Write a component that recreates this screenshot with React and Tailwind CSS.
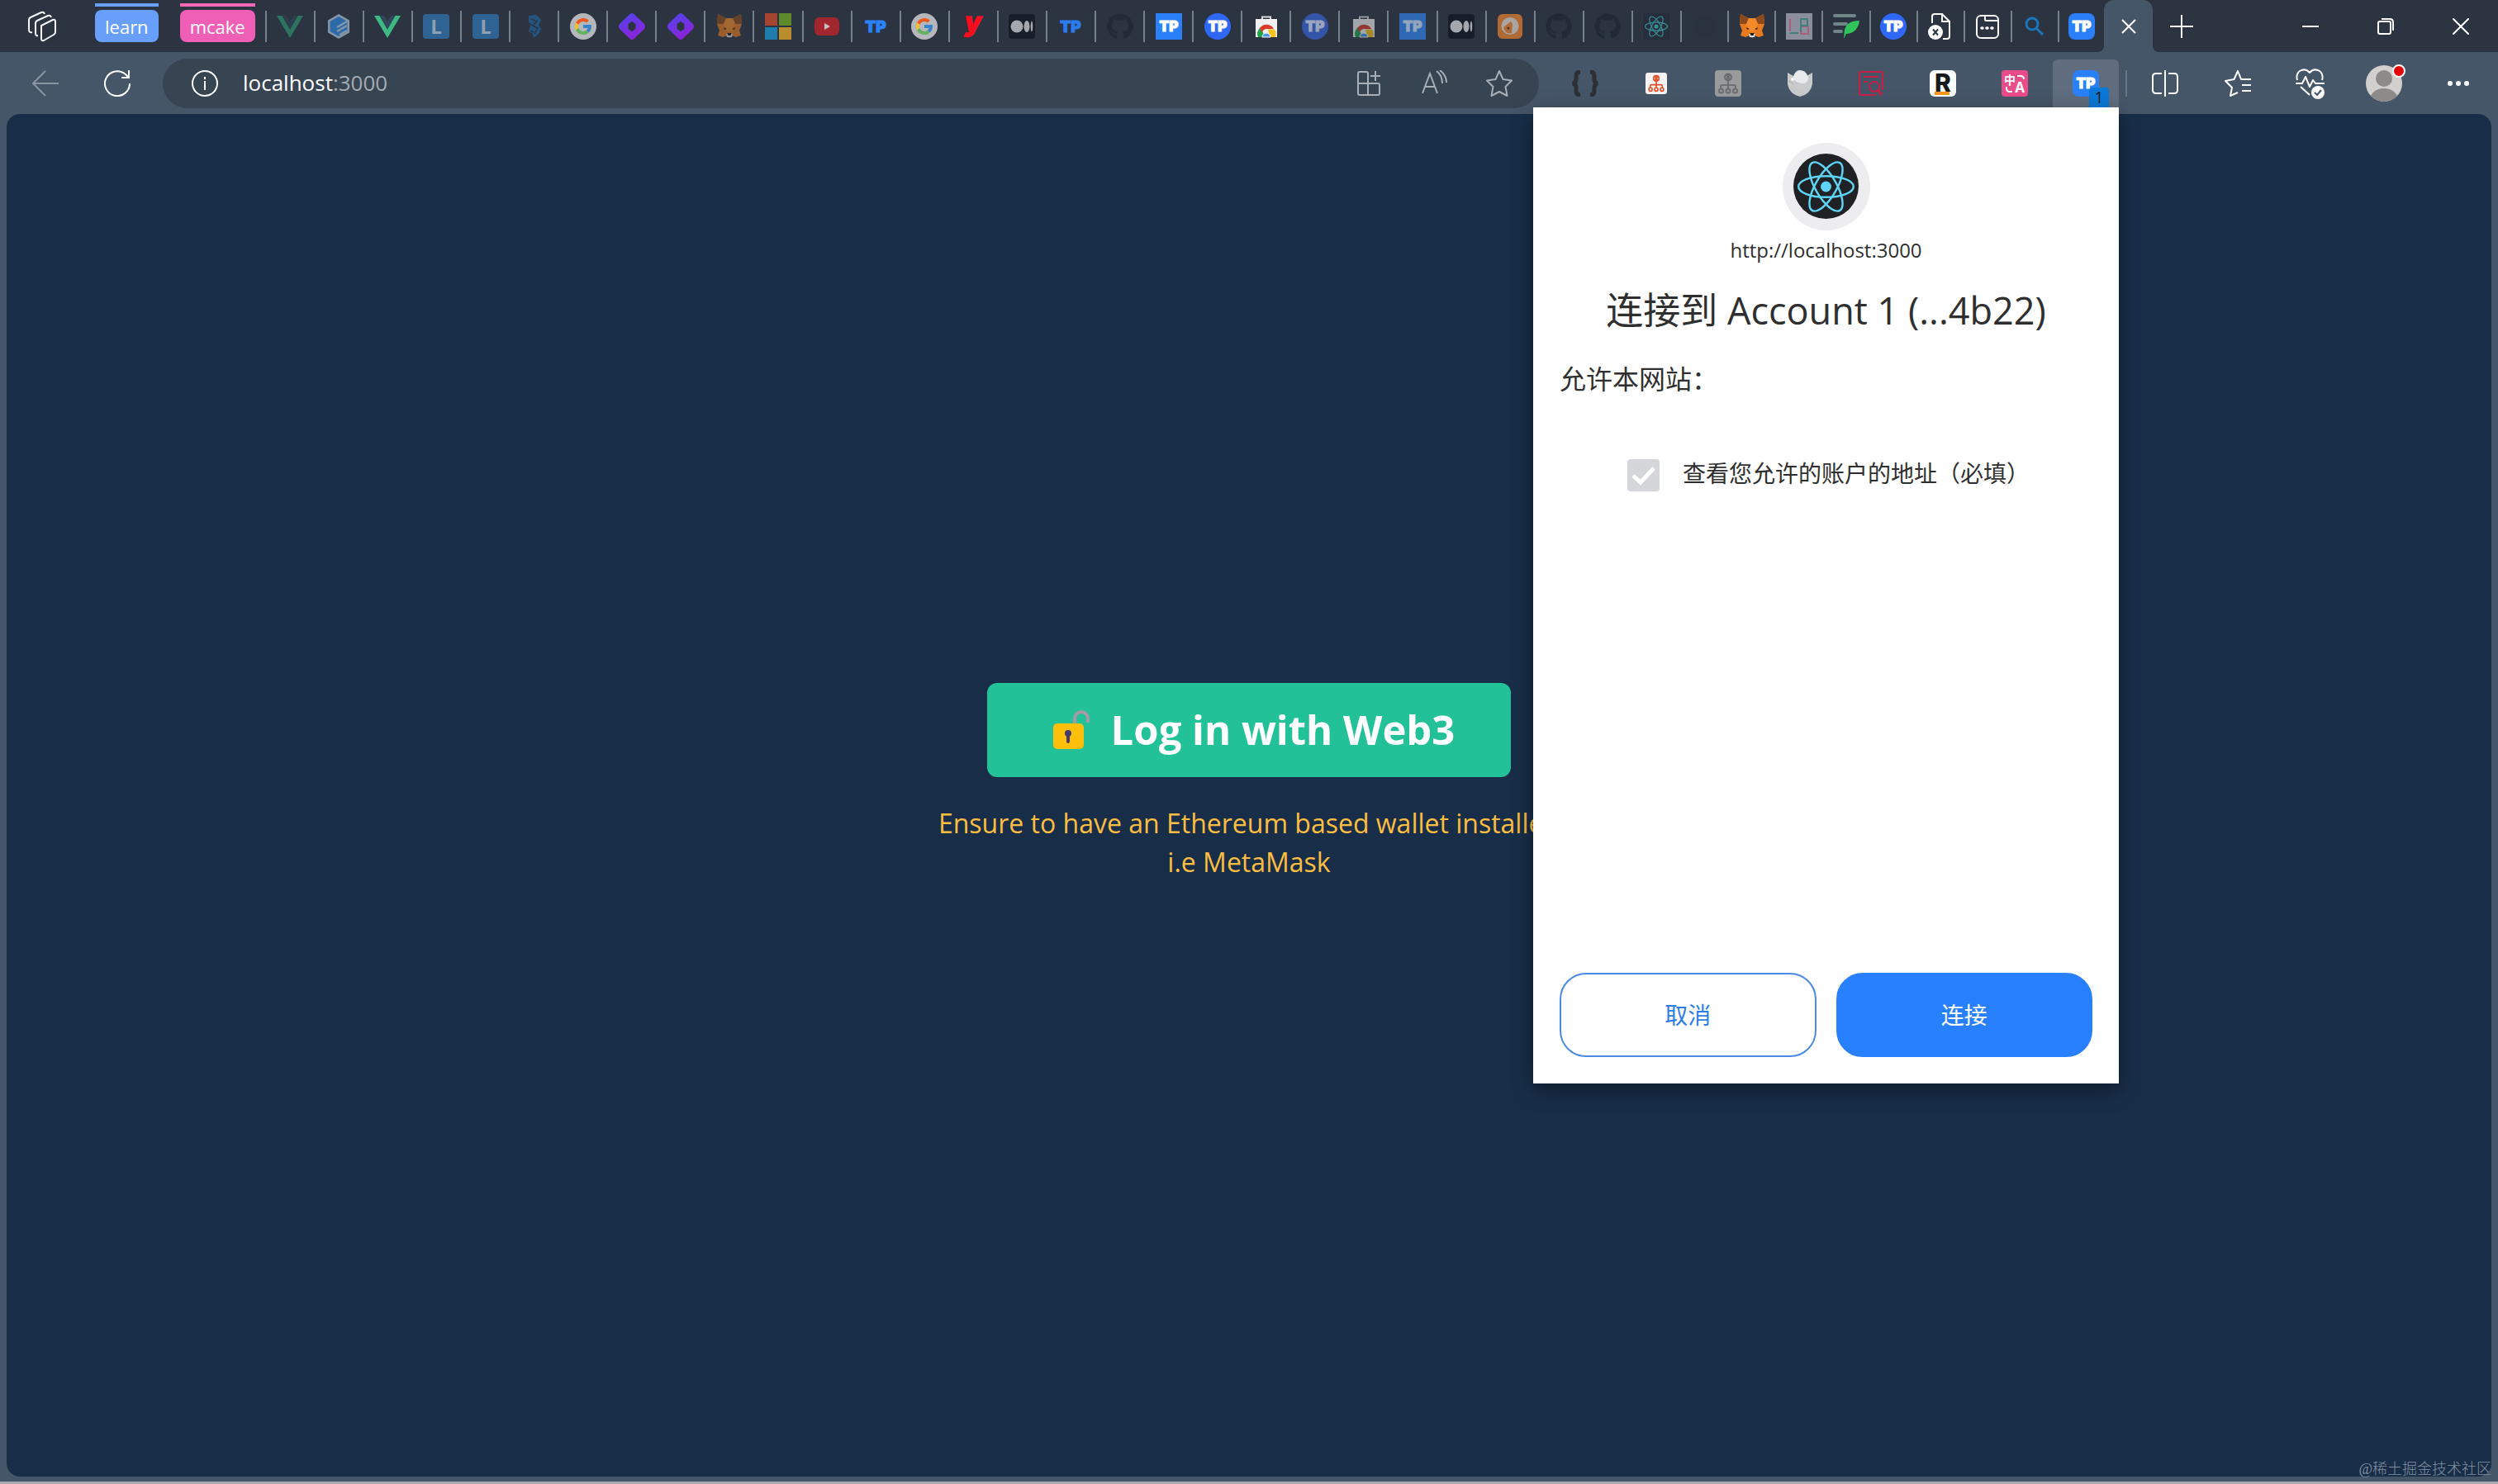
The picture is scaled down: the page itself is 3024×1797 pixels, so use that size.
import React, { useState } from "react";
import { FaGithub } from "react-icons/fa";
import { FcGoogle } from "react-icons/fc";

const Vue = ({ color, inner }) => (
  <svg viewBox="0 0 32 32" className="size-8">
    <path d="M0 3h6.5L16 19.5 25.500 3H32L16 30z" fill={color} />
    <path d="M6.500 3H12l4 7 4-7h5.500L16 19.500z" fill={inner} />
  </svg>
);

const Hexagon = () => (
  <svg viewBox="0 0 32 32" className="size-8">
    <path d="M16 1l13 7.500v15L16 31 3 23.500v-15z" fill="#8496a8" />
    <path d="M16 4l10.500 6v12L16 28 5.500 22V10z" fill="#2c6ba8" />
    <path d="M14 17l12-7M14 22l12-7M17 26l9-5" stroke="#8496a8" strokeWidth="2.500" fill="none" />
  </svg>
);

const Letter = () => (
  <svg viewBox="0 0 32 32" className="size-8">
    <rect y="1" width="32" height="30" rx="4" fill="#2f6393" />
    <text x="16" y="25" textAnchor="middle" fontSize="24" fontWeight="700" fill="#8e9fb0" className="font-['Open_Sans',sans-serif]">
      L
    </text>
  </svg>
);

const Brush = () => (
  <svg viewBox="0 0 32 32" className="size-8">
    <path d="M9 3l9-1 6 6-3 6 3 5-3 6-6 5-1-5-5-3 2-7-2-5z" fill="#25547e" />
    <path d="M12 7l7 3-5 5 6 3-4 7M10 12l3 3M11 21l4 2" stroke="#2b3440" strokeWidth="1.500" fill="none" />
  </svg>
);

const Google = () => (
  <span className="flex size-8 items-center justify-center rounded-full bg-[#b4b8bc]">
    <FcGoogle className="size-6 opacity-80" />
  </span>
);

const Diamond = () => (
  <svg viewBox="0 0 32 32" className="size-8">
    <defs>
      <linearGradient id="diamond" x1="0" y1="0" x2="0.4" y2="1">
        <stop offset="0" stopColor="#4f46f0" />
        <stop offset="1" stopColor="#8a24d8" />
      </linearGradient>
    </defs>
    <path d="M13 1.500q3-3 6 0L31 13q2 3 0 6L19 30.500q-3 3-6 0L1 19q-2-3 0-6z" fill="url(#diamond)" />
    <path d="M16 10l4.500 3v6L16 22l-4.500-3v-6z" fill="#2b3440" />
  </svg>
);

const Fox = () => (
  <svg viewBox="0 0 32 32" className="size-8">
    <path d="M2 1l10 5h8l10-5 1 12-3 8 2 6-6 2-5-2-3 3-3-3-5 2-6-2 2-6-3-8z" fill="#e8791f" />
    <path d="M2 1l10 5-3 7-8 0zM30 1l-10 5 3 7 8 0z" fill="#8a4a1c" />
    <path d="M12 6h8l3 7-4 9h-6l-4-9z" fill="#f48a2a" />
    <path d="M9 17l4 2-3 1zM23 17l-4 2 3 1z" fill="#3a2a24" />
    <path d="M12 25h8l-1 4h-6z" fill="#d8d8d8" />
    <path d="M13.500 24h5l-1 3h-3z" fill="#1c1c1c" />
  </svg>
);

const Microsoft = () => (
  <svg viewBox="0 0 32 32" className="size-8">
    <rect width="15" height="15" fill="#a64331" />
    <rect x="17" width="15" height="15" fill="#5d8b2c" />
    <rect y="17" width="15" height="15" fill="#1f7cab" />
    <rect x="17" y="17" width="15" height="15" fill="#b98d2b" />
  </svg>
);

const Youtube = () => (
  <svg viewBox="0 0 32 32" className="size-8">
    <rect x="1" y="5" width="30" height="22" rx="6" fill="#a1262e" />
    <path d="M13 12l7 4-7 4z" fill="#c9bfc0" />
  </svg>
);

const TP = ({ shape, fill, color = "#ffffff", size = "size-8" }) => (
  <svg viewBox="0 0 32 32" className={size}>
    {shape === "circle" && <circle cx="16" cy="16" r="16" fill={fill} />}
    {shape === "square" && <rect width="32" height="32" fill={fill} />}
    {shape === "rounded" && <rect width="32" height="32" rx="8" fill={fill} />}
    <text
      x="16"
      y={shape ? 22 : 23}
      textAnchor="middle"
      fontSize={shape ? 17 : 19}
      fontWeight="900"
      fill={color}
      stroke={color}
      strokeWidth="1"
      className="font-['Inter',sans-serif]"
    >
      TP
    </text>
  </svg>
);

const Yandex = () => (
  <svg viewBox="0 0 32 32" className="size-8 overflow-visible">
    <text x="16" y="22" textAnchor="middle" fontSize="32" fontWeight="900" fontStyle="italic" fill="#fb0d1f" stroke="#fb0d1f" className="font-['Inter',sans-serif]">
      y
    </text>
  </svg>
);

const Medium = () => (
  <svg viewBox="0 0 32 32" className="size-8">
    <rect y="1" width="32" height="30" rx="4" fill="#171d29" />
    <circle cx="10" cy="16" r="7.500" fill="#a5a7ad" />
    <ellipse cx="22" cy="16" rx="3.500" ry="7" fill="#a5a7ad" />
    <ellipse cx="28" cy="16" rx="1.300" ry="6.500" fill="#a5a7ad" />
  </svg>
);

const Store = () => (
  <svg viewBox="0 0 32 32" className="size-8">
    <path d="M11 7V4.500h10V7" fill="none" stroke="#d5d7d9" strokeWidth="2" />
    <rect x="3" y="7" width="26" height="22" fill="#f1f1f1" />
    <path d="M6 29a10 10 0 0 1 3-12l4 9-1 3z" fill="#22a04a" />
    <path d="M8 18a10 10 0 0 1 17 1H16a6 6 0 0 0-5 4z" fill="#dc3a2b" />
    <path d="M18 19.500h7.500A10 10 0 0 1 27 29h-7z" fill="#f8c51c" />
    <path d="M11 29a5 5 0 1 1 10 0z" fill="#4a94e8" stroke="#ffffff" />
  </svg>
);

const Orange = () => (
  <svg viewBox="0 0 32 32" className="size-8">
    <rect x="1" y="1" width="30" height="30" rx="6" fill="#b06a34" />
    <circle cx="16" cy="15.500" r="10.500" fill="#a9a5a3" />
    <path d="M8 17l9-7 2 3-1 11q-8 2-10-7z" fill="#b06a34" />
    <circle cx="14" cy="18" r="1.500" fill="#4b3a33" />
  </svg>
);

const ReactLogo = ({ color, size, stroke = 1.2 }) => (
  <svg viewBox="-16 -16 32 32" className={size} fill="none" stroke={color} strokeWidth={stroke}>
    <circle r="2.600" fill={color} stroke="none" />
    <ellipse rx="13.500" ry="5.200" />
    <ellipse rx="13.500" ry="5.200" transform="rotate(60)" />
    <ellipse rx="13.500" ry="5.200" transform="rotate(120)" />
  </svg>
);

const LowerBound = () => (
  <svg viewBox="0 0 32 32" className="size-8">
    <rect width="32" height="32" fill="#8b8f9d" />
    <path d="M5 7v15M18 22v3h9v-9h-9" stroke="#a4607c" strokeWidth="2" fill="none" />
    <path d="M5 24h10M18 15V7h8v8zM18 15v7" stroke="#3e8079" strokeWidth="2" fill="none" />
  </svg>
);

const Feather = () => (
  <svg viewBox="0 0 32 32" className="size-8">
    <path d="M2 3h24M2 13h14M2 22h8" stroke="#6f8688" strokeWidth="4" strokeLinecap="round" />
    <path d="M32 9Q17 9 14 20l-1 11 3-6q14-1 16-16z" fill="#2fc55a" />
  </svg>
);

const BlockedFile = () => (
  <svg viewBox="0 0 32 32" className="size-8" fill="none" stroke="#ffffff" strokeWidth="2">
    <path d="M6 12V4q0-3 3-3h9l9 9v18q0 3-3 3h-5M18 1v9h9" />
    <circle cx="10" cy="23" r="9" fill="#ffffff" stroke="none" />
    <path d="M7 19.500l6 7M13 19.500l-6 7" stroke="#2b3440" />
  </svg>
);

const PageDots = () => (
  <svg viewBox="0 0 32 32" className="size-8" fill="none" stroke="#ffffff" strokeWidth="2">
    <rect x="3" y="3" width="26" height="27" rx="5" />
    <path d="M13 3v5q0 1 1 1h15" />
    <path d="M9 18h1M15 18h1M21 18h1" strokeWidth="3.500" strokeLinecap="round" />
  </svg>
);

const Search = () => (
  <svg viewBox="0 0 32 32" className="size-8" fill="none" stroke="#1b75bd" strokeWidth="3">
    <circle cx="13" cy="13" r="7" />
    <path d="M18 18l8 8" />
  </svg>
);

const DarkGithub = () => <FaGithub className="size-8 text-[#222a35]" />;

const firstTabs = [
  ["Vue", <Vue color="#2c7360" inner="#2d3e4e" />],
  ["Builder", <Hexagon />],
  ["Vue docs", <Vue color="#3fb984" inner="#33475b" />],
  ["Learn", <Letter />],
  ["Lessons", <Letter />],
  ["Notes", <Brush />],
  ["Google", <Google />],
  ["Diamond", <Diamond />],
  ["Diamond app", <Diamond />],
  ["MetaMask", <span className="opacity-60"><Fox /></span>],
  ["Microsoft", <Microsoft />],
  ["YouTube", <Youtube />],
  ["TokenPocket", <TP color="#2a82f8" />],
  ["Google search", <Google />],
  ["Yarn", <Yandex />],
  ["Medium", <Medium />],
  ["TokenPocket docs", <TP color="#2a7cec" />],
  ["GitHub", <DarkGithub />],
  ["TokenPocket help", <TP shape="square" fill="#2a80f8" />],
  ["TokenPocket wallet", <TP shape="circle" fill="#2f68f6" />],
  ["Web store", <Store />],
  ["TokenPocket guide", <TP shape="circle" fill="#3454a8" color="#9aa6bd" />],
  ["Extensions", <span className="opacity-60"><Store /></span>],
  ["TokenPocket site", <TP shape="square" fill="#2f68b4" color="#94a6bd" />],
  ["Medium story", <Medium />],
  ["Blog", <Orange />],
  ["GitHub repo", <DarkGithub />],
  ["GitHub issues", <DarkGithub />],
  ["React", <span className="bg-[#252e3a]"><ReactLogo color="#3c8f98" size="size-8" /></span>],
];

const secondTabs = [
  ["Draft", <span className="size-6 rounded-full bg-[#29323e]" />],
  ["MetaMask docs", <Fox />],
  ["LB", <LowerBound />],
  ["Feather", <Feather />],
  ["TokenPocket app", <TP shape="circle" fill="#2f68f6" />],
  ["Missing file", <BlockedFile />],
  ["Page", <PageDots />],
  ["Search", <Search />],
];

const TabButton = ({ name, children }) => (
  <button
    aria-label={name}
    className="flex h-[38px] min-w-0 flex-1 items-center justify-center border-l-2 border-[#76808a]"
  >
    {children}
  </button>
);

const TabGroup = ({ label, bar, chip }) => (
  <div className="flex flex-col gap-1">
    <div className={`h-1 ${bar}`} />
    <button className={`h-[39px] rounded-lg px-3 text-[22px] leading-none text-white ${chip}`}>{label}</button>
  </div>
);

const TabBar = () => (
  <header className="flex h-[63px] items-center bg-[#2b3440]">
    <button aria-label="Workspaces" className="ml-[34px] mr-[47px]">
      <svg viewBox="0 0 34 38" className="h-[38px] w-[34px]" fill="none" stroke="#f4f6f8" strokeWidth="2" strokeLinejoin="round">
        <path d="M16 18l14-7q3-1 3 2v13q0 2-2 3l-12 7q-3 1-3-2z" />
        <path d="M12 30q-3 1-3-3V15q0-2 2-3l13-6q3-1 4 2M5 26q-4 1-4-3V11q0-2 2-3L16 2q3-1 4 2" />
      </svg>
    </button>
    <div className="flex gap-[26px] self-start pt-1">
      <TabGroup label="learn" bar="bg-[#689ffa]" chip="bg-[#689ffa]" />
      <TabGroup label="mcake" bar="bg-[#f06ab8]" chip="bg-[#ef5fb6]" />
    </div>
    <nav aria-label="Tabs" className="ml-3 flex flex-1 items-center">
      <div className="flex flex-[1714] items-center">
        {firstTabs.map(([name, icon]) => (
          <TabButton key={name} name={name}>{icon}</TabButton>
        ))}
      </div>
      <div className="flex flex-[457] items-center">
        {secondTabs.map(([name, icon]) => (
          <TabButton key={name} name={name}>{icon}</TabButton>
        ))}
      </div>
    </nav>
    <button aria-label="TokenPocket" className="flex h-[38px] w-14 items-center justify-center border-l-2 border-[#76808a]">
      <TP shape="rounded" fill="#2a80f8" />
    </button>
    <div className="relative flex w-[59px] items-center justify-center self-stretch rounded-t-xl bg-[#465669] before:absolute before:bottom-0 before:-left-2 before:size-2 before:bg-[radial-gradient(circle_at_0_0,transparent_8px,#465669_8px)] after:absolute after:bottom-0 after:-right-2 after:size-2 after:bg-[radial-gradient(circle_at_100%_0,transparent_8px,#465669_8px)]">
      <button aria-label="Close tab">
        <svg viewBox="0 0 18 18" className="size-[18px]" stroke="#ffffff" strokeWidth="2">
          <path d="M1 1l16 16M17 1L1 17" />
        </svg>
      </button>
    </div>
    <button aria-label="New tab" className="flex w-[69px] justify-center">
      <svg viewBox="0 0 28 28" className="size-7" stroke="#ffffff" strokeWidth="2">
        <path d="M14 0v28M0 14h28" />
      </svg>
    </button>
    <div className="ml-[76px] flex">
      <button aria-label="Minimize" className="flex w-[91px] items-center justify-center">
        <svg viewBox="0 0 20 20" className="size-5" stroke="#ffffff" strokeWidth="2">
          <path d="M0 10h20" />
        </svg>
      </button>
      <button aria-label="Restore" className="flex w-[91px] items-center justify-center">
        <svg viewBox="0 0 20 20" className="size-5" stroke="#ffffff" strokeWidth="2" fill="none">
          <rect x="1" y="4" width="15" height="15" rx="2" />
          <path d="M5 1h10q4 0 4 4v10" />
        </svg>
      </button>
      <button aria-label="Close" className="flex w-[91px] items-center justify-center">
        <svg viewBox="0 0 20 20" className="size-5" stroke="#ffffff" strokeWidth="2">
          <path d="M0 0l20 20M20 0L0 20" />
        </svg>
      </button>
    </div>
  </header>
);

const Sitemap = ({ bg, color, size }) => (
  <svg viewBox="0 0 32 32" className={size}>
    <rect width="32" height="32" rx="4" fill={bg} />
    <g fill="none" stroke={color} strokeWidth="2">
      <circle cx="16" cy="8.500" r="5" fill={color} stroke="none" />
      <path d="M14.500 7L13 8.500l1.500 1.500M17.500 7L19 8.500 17.500 10" stroke={bg} strokeWidth="1" />
      <path d="M16 13v10M7 23v-3q0-2 2-2h14q2 0 2 2v3" />
      <circle cx="7.500" cy="25" r="2.500" />
      <circle cx="16" cy="25" r="2.500" />
      <circle cx="24.500" cy="25" r="2.500" />
    </g>
  </svg>
);

const ExtButton = ({ name, children }) => (
  <button aria-label={name} className="flex h-[58px] flex-1 items-center justify-center">
    {children}
  </button>
);

const WalletPopup = () => (
  <section
    aria-label="TokenPocket"
    className="absolute right-0 top-full z-10 flex min-h-[1182px] w-[709px] flex-col bg-white px-8 pb-8 pt-[43px] text-left text-[#2f2f2f] shadow-[0_8px_24px_rgba(0,0,0,0.4)]"
  >
    <div className="flex size-[106px] items-center justify-center self-center rounded-full bg-[#ededf0]">
      <div className="flex size-[79px] items-center justify-center rounded-full bg-[#202124]">
        <ReactLogo color="#5fd4f4" size="size-20" stroke={1} />
      </div>
    </div>
    <p className="mt-1 text-center text-[24px] leading-10">http://localhost:3000</p>
    <h1 className="mt-5 text-center text-[45px] leading-[66px]">连接到 Account 1 (...4b22)</h1>
    <p className="mt-[26px] text-[32px] leading-[48px]">允许本网站：</p>
    <label className="mt-[68px] flex items-end gap-7 pl-[82px] text-[28px] leading-[44px]">
      <span className="relative flex size-[39px]">
        <input type="checkbox" defaultChecked disabled className="size-[39px] appearance-none rounded-sm bg-[#d5d6da]" />
        <svg viewBox="0 0 39 39" className="absolute inset-0 size-[39px]" fill="none" stroke="#ffffff" strokeWidth="5">
          <path d="M7 20l9 8 16-17" />
        </svg>
      </span>
      查看您允许的账户的地址（必填）
    </label>
    <div className="mt-auto flex gap-6 text-[28px]">
      <button className="h-[102px] flex-1 basis-0 rounded-[32px] border-2 border-[#4a8ae6] text-[#2d7de9]">取消</button>
      <button className="h-[102px] flex-1 basis-0 rounded-[32px] border-2 border-[#2980ff] bg-[#2980ff] text-white">连接</button>
    </div>
  </section>
);

const Extensions = () => (
  <div className="ml-4 flex w-[686px] gap-[7px]">
    <ExtButton name="JSON viewer">
      <svg viewBox="0 0 32 32" className="size-8" fill="none" stroke="#2c2f33" strokeWidth="5">
        <path d="M10 2Q5 2 5 7v4q0 4-4 5 4 1 4 5v4q0 5 5 5M22 2q5 0 5 5v4q0 4 4 5-4 1-4 5v4q0 5-5 5" />
      </svg>
    </ExtButton>
    <ExtButton name="Sitemap"><Sitemap bg="#f6f4f4" color="#e0502c" size="size-[26px]" /></ExtButton>
    <ExtButton name="Sitemap off"><Sitemap bg="#999a9b" color="#6c6d6e" size="size-8" /></ExtButton>
    <ExtButton name="Rabbit">
      <svg viewBox="0 0 32 32" className="size-8">
        <path d="M1 3l7 4h16l7-4v14Q29 29 16 32 3 29 1 17z" fill="#c9cacb" />
        <path d="M8 8q2-8 8-8t9 6q3 8-4 10-12 0-13-8z" fill="#e9eaec" />
        <circle cx="7" cy="11" r="2" fill="#f7f7f7" />
        <path d="M2 13q4 1 6 4" stroke="#a4a5a7" fill="none" />
      </svg>
    </ExtButton>
    <ExtButton name="Page search">
      <svg viewBox="0 0 32 32" className="size-8" fill="none" stroke="#c61f44" strokeWidth="2">
        <path d="M22 30H4q-2 0-2-2V4q0-2 2-2h24q2 0 2 2v20M7 8h18M7 14h5" />
        <circle cx="20" cy="20" r="6" />
        <path d="M24 24l5 6" strokeWidth="3" />
      </svg>
    </ExtButton>
    <ExtButton name="R">
      <svg viewBox="0 0 32 32" className="size-8 overflow-visible">
        <rect width="32" height="32" rx="6" fill="#ffffff" />
        <text x="16" y="26" textAnchor="middle" fontSize="30" fontWeight="800" fill="#18191b" className="font-['Inter',sans-serif]">
          R
        </text>
        <rect x="6" y="26" width="18" height="4" fill="#f5961e" />
      </svg>
    </ExtButton>
    <ExtButton name="Translate">
      <svg viewBox="0 0 32 32" className="size-8">
        <rect width="32" height="32" rx="4" fill="#ea4c89" />
        <text x="10" y="17" textAnchor="middle" fontSize="14" fontWeight="700" fill="#ffffff" className="font-['Noto_Sans_CJK_SC',sans-serif]">
          中
        </text>
        <text x="22" y="27" textAnchor="middle" fontSize="17" fontWeight="700" fill="#ffffff" className="font-['Open_Sans',sans-serif]">
          A
        </text>
        <path d="M19 7h4q4 0 4 4M6 20v2q0 4 4 4h3" fill="none" stroke="#ffffff" strokeWidth="2" />
      </svg>
    </ExtButton>
    <div className="relative flex h-[58px] flex-1">
      <button aria-label="TokenPocket wallet" className="flex flex-1 items-center justify-center rounded-t-md bg-[#5f6d7e]">
        <TP shape="rounded" fill="#2a80f8" />
      </button>
      <span className="absolute bottom-0 right-3 flex h-6 w-6 items-center justify-center rounded-t-sm bg-[#0b79d8] text-[20px] leading-none text-[#0d1a28]">
        1
      </span>
      <WalletPopup />
    </div>
  </div>
);

const Toolbar = () => {
  const [port, setPort] = useState(":3000");

  return (
    <div className="flex h-[75px] items-center pl-[11px]">
      <button aria-label="Back" className="flex w-[87px] justify-center">
        <svg viewBox="0 0 32 32" className="size-8" fill="none" stroke="#8994a1" strokeWidth="2">
          <path d="M32 16H1M16 1L1 16l15 15" />
        </svg>
      </button>
      <button aria-label="Refresh" className="flex w-[87px] justify-center">
        <svg viewBox="0 0 32 32" className="size-8" fill="none" stroke="#ffffff" strokeWidth="2">
          <path d="M31 16A15 15 0 1 1 26 5l4 4M30 0v9h-9" />
        </svg>
      </button>
      <div className="ml-3 flex h-[60px] flex-1 items-center rounded-full bg-[#374452] pl-[35px] pr-[9px]">
        <svg viewBox="0 0 32 32" className="mr-[30px] size-8" fill="none" stroke="#ffffff" strokeWidth="2">
          <circle cx="16" cy="16" r="15" />
          <path d="M16 13v11M16 8v3" />
        </svg>
        <label htmlFor="address" className="text-[26px] text-white">localhost</label>
        <input
          id="address"
          value={port}
          onChange={(e) => setPort(e.target.value)}
          className="min-w-0 flex-1 bg-transparent text-[26px] text-[#a3abb4] outline-none"
        />
        <button aria-label="Install app" className="flex w-[79px] justify-center">
          <svg viewBox="0 0 32 32" className="size-8" fill="none" stroke="#a7aeb5" strokeWidth="2">
            <path d="M15 30V4q0-2-2-2H5Q3 2 3 4v24q0 2 2 2h22q2 0 2-2V18q0-2-2-2H3M24 1v12M18 7h12" />
          </svg>
        </button>
        <button aria-label="Read aloud" className="flex w-[79px] justify-center">
          <svg viewBox="0 0 32 32" className="size-8" fill="none" stroke="#a7aeb5" strokeWidth="2">
            <path d="M2 28L11 4l9 24M5 20h12M19 1q7 5 7 15M23 0q8 6 8 15" />
          </svg>
        </button>
        <button aria-label="Add to favorites" className="flex w-[79px] justify-center">
          <svg viewBox="0 0 32 32" className="size-8" fill="none" stroke="#a7aeb5" strokeWidth="2" strokeLinejoin="round">
            <path d="M16 1l4.500 10L31 12.500l-7.500 7.500 2 11L16 26l-9.500 5 2-11L1 12.500 11.500 11z" />
          </svg>
        </button>
      </div>
      <Extensions />
      <div className="ml-2 mr-0.5 h-8 w-0.5 bg-[#66758a]" />
      <button aria-label="Split screen" className="flex w-[88px] justify-center">
        <svg viewBox="0 0 32 32" className="size-8" fill="none" stroke="#ffffff" strokeWidth="2">
          <path d="M12 4H5Q1 4 1 8v16q0 4 4 4h7M20 4h7q4 0 4 4v16q0 4-4 4h-7M16 0v32" />
        </svg>
      </button>
      <button aria-label="Favorites" className="flex w-[88px] justify-center">
        <svg viewBox="0 0 32 32" className="size-8" fill="none" stroke="#ffffff" strokeWidth="2" strokeLinejoin="round">
          <path d="M32 11H20L16 1l-4.500 10L1 13l8 8-2 10 9-4M21 18h11M21 25h11" />
        </svg>
      </button>
      <button aria-label="Browser essentials" className="flex w-[88px] justify-center">
        <svg viewBox="0 0 36 38" className="h-[38px] w-9" fill="none" stroke="#ffffff" strokeWidth="2" strokeLinejoin="round">
          <path d="M2 15Q0 8 5 4q7-4 12 2 5-6 12-2 5 4 3 11M0 19h8l4-8 5 12 4-8 3 4h11M6 23l11 10" />
          <circle cx="27" cy="30" r="8" fill="#ffffff" stroke="none" />
          <path d="M23 30l3 3 5-6" stroke="#465669" />
        </svg>
      </button>
      <button aria-label="Profile" className="flex w-[90px] justify-center">
        <span className="relative">
          <svg viewBox="0 0 44 44" className="size-11">
            <clipPath id="avatar">
              <circle cx="22" cy="22" r="22" />
            </clipPath>
            <g clipPath="url(#avatar)">
              <rect width="44" height="44" fill="#d2d0ce" />
              <circle cx="22" cy="16" r="10" fill="#8d8b89" />
              <ellipse cx="22" cy="42" rx="17" ry="14" fill="#8d8b89" />
            </g>
          </svg>
          <span className="absolute -right-1 -top-px size-4 rounded-full border-2 border-white bg-[#e30505]" />
        </span>
      </button>
      <button aria-label="Settings and more" className="mr-[3px] flex w-[90px] justify-center gap-1.5">
        <span className="size-1 rounded-full bg-white ring-1 ring-white" />
        <span className="size-1 rounded-full bg-white ring-1 ring-white" />
        <span className="size-1 rounded-full bg-white ring-1 ring-white" />
      </button>
    </div>
  );
};

const LoginPage = () => (
  <main className="mx-2 flex flex-1 flex-col items-center justify-center gap-8 rounded-2xl bg-[#182e48] pb-8">
    <button className="flex h-[114px] items-center gap-[26px] rounded-xl bg-[#23c198] pl-20 pr-[68px] text-[49px] font-bold text-white">
      <svg viewBox="0 0 44 48" className="h-12 w-11">
        <path d="M26 17V10a8 8 0 0 1 16 0v5" fill="none" stroke="#a79aa5" strokeWidth="4" />
        <rect y="16" width="37" height="31" rx="5" fill="#fdbf0a" />
        <circle cx="18" cy="28" r="4" fill="#433b6b" />
        <path d="M18 29v9" stroke="#433b6b" strokeWidth="4" strokeLinecap="round" />
      </svg>
      Log in with Web3
    </button>
    <p className="text-center text-[32px] leading-[47px] text-[#fbbd42]">
      Ensure to have an Ethereum based wallet installed
      <br />
      i.e MetaMask
    </p>
  </main>
);

const App = () => (
  <div className="relative flex min-h-screen flex-col bg-[#465669] font-['Open_Sans','Noto_Sans_CJK_SC',sans-serif]">
    <TabBar />
    <Toolbar />
    <LoginPage />
    <footer className="mt-1.5 h-[3px] bg-[#a9abb0]" />
    <span className="absolute bottom-1 right-2 text-[18px] font-light text-[#8390a0] font-['Liberation_Serif','Noto_Sans_CJK_SC',serif]">
      @稀土掘金技术社区
    </span>
  </div>
);

export default App;
